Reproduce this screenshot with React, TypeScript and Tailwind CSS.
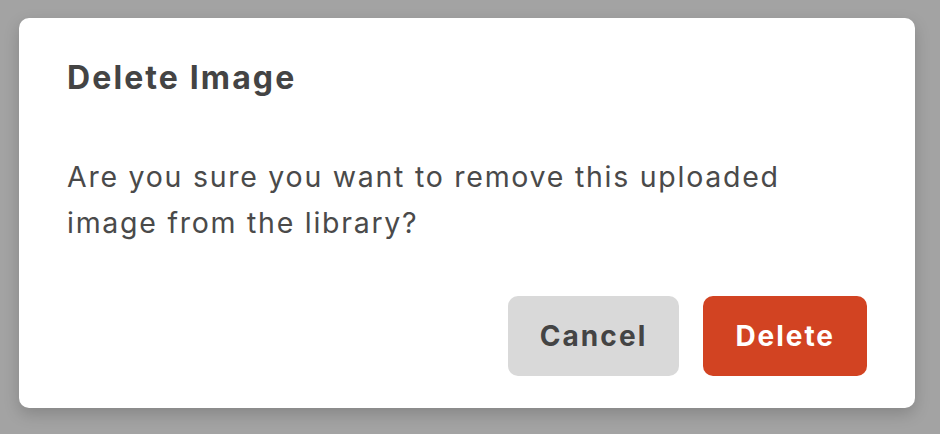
export default function App() {
  return (
    <div className="min-h-screen w-full bg-[#a3a3a3] pt-[18px] pl-[19px] font-['Inter',sans-serif]">
      <div className="w-[896px] rounded-[10px] bg-white px-12 pt-8 pb-8 shadow-[0_6px_16px_rgba(0,0,0,0.18)]">
        <h2 className="text-[32px] font-bold leading-[56px] tracking-[0.066em] text-[#444444]">Delete Image</h2>
        <p className="mt-[48px] max-w-[740px] text-[28.5px] leading-[46px] tracking-[0.061em] text-[#4a4a4a]">
          Are you sure you want to remove this uploaded image from the library?
        </p>
        <div className="mt-[50px] flex justify-end gap-6">
          <button className="h-20 rounded-[10px] bg-[#d9d9d9] px-8 text-[28px] font-bold tracking-[0.075em] text-[#444444]">Cancel</button>
          <button className="h-20 rounded-[10px] bg-[#d24322] px-8 text-[28px] font-bold tracking-[0.07em] text-white">Delete</button>
        </div>
      </div>
    </div>
  )
}
